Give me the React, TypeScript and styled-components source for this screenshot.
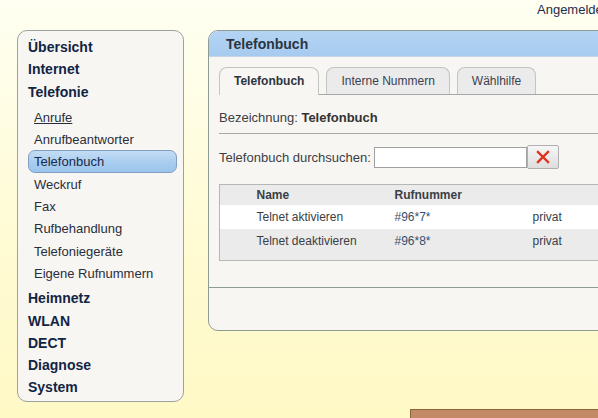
import styled, { createGlobalStyle } from 'styled-components';

const GlobalStyle = createGlobalStyle`
  html, body {
    margin: 0;
    padding: 0;
    height: 100%;
    overflow: hidden;
  }
  body {
    background: linear-gradient(to bottom, #fffff2 0%, #fffbd2 60%, #fff9c6 100%);
    font-family: "Liberation Sans", Arial, sans-serif;
    color: #333;
  }
`;

const Page = styled.div`
  width: 598px;
  height: 418px;
  overflow: hidden;
`;

const TopBar = styled.div`
  height: 30px;
  padding-left: 537px;
  font-size: 13px;
  line-height: 20px;
  color: #1c2c4c;
  white-space: nowrap;
  overflow: hidden;
`;

const Body = styled.div`
  display: flex;
  align-items: flex-start;
  padding-left: 17px;
  gap: 24px;
`;

const Sidebar = styled.nav`
  width: 167px;
  height: 372px;
  flex-shrink: 0;
  background: #f8f6f2;
  border: 1px solid #9aa49c;
  border-radius: 10px;
  padding: 5px 6px 0 10px;
  box-sizing: border-box;
  display: flex;
  flex-direction: column;
`;

const MainItem = styled.div`
  font-size: 14px;
  font-weight: bold;
  color: #122444;
  height: 22.3px;
  line-height: 22px;
`;

const SubList = styled.div`
  display: flex;
  flex-direction: column;
  margin: 3px 0 3px 0;
`;

const SubItem = styled.div<{ $active?: boolean; $link?: boolean }>`
  font-size: 13px;
  height: 22.3px;
  line-height: 21px;
  padding-left: 5px;
  box-sizing: border-box;
  text-decoration: ${(p) => (p.$link ? 'underline' : 'none')};
  border-radius: 7px;
  border: 1px solid ${(p) => (p.$active ? '#7f9fc4' : 'transparent')};
  background: ${(p) =>
    p.$active ? 'linear-gradient(to bottom, #c4dcf4 0%, #a8cdf0 55%, #9cc4ec 100%)' : 'transparent'};
  color: ${(p) => (p.$active ? '#1a2a48' : '#2a2e3a')};
`;

const Panel = styled.section`
  width: 420px;
  height: 301px;
  flex-shrink: 0;
  background: #f8f6f2;
  border: 1px solid #8e9c94;
  border-radius: 10px;
  overflow: hidden;
  box-sizing: border-box;
  display: flex;
  flex-direction: column;
`;

const PanelHeader = styled.h2`
  margin: 0;
  height: 25px;
  background: linear-gradient(to bottom, #b4d4f4 0%, #a6cbef 100%);
  border-bottom: 1px solid #c6d6e4;
  font-size: 14px;
  font-weight: bold;
  color: #2c3440;
  line-height: 26px;
  padding-left: 17px;
`;

const PanelContent = styled.div`
  padding: 10px 0 0 10px;
  height: 231px;
  border-bottom: 1px solid #8e9c94;
  box-sizing: border-box;
`;

const Tabs = styled.div`
  display: flex;
  gap: 7px;
  border-bottom: 1px solid #a8a8a8;
  height: 27px;
`;

const Tab = styled.div<{ $active?: boolean }>`
  box-sizing: border-box;
  padding: 0 14px;
  font-size: 12px;
  font-weight: ${(p) => (p.$active ? 'bold' : 'normal')};
  color: ${(p) => (p.$active ? '#2c3440' : '#3a4250')};
  line-height: 26px;
  border: 1px solid #c4c4c4;
  border-bottom: none;
  border-radius: 8px 8px 0 0;
  background: ${(p) => (p.$active ? '#f8f6f2' : '#ebebeb')};
  margin-bottom: ${(p) => (p.$active ? '-1px' : '0')};
  height: ${(p) => (p.$active ? '28px' : '27px')};
`;

const Field = styled.div`
  font-size: 13px;
  color: #3a3e46;
  padding: 15px 0 8px 0;
  border-bottom: 1px solid #a8aaa8;
  b {
    color: #333;
  }
`;

const SearchRow = styled.div`
  display: flex;
  align-items: center;
  font-size: 13px;
  color: #3a3e46;
  padding-top: 11px;
  gap: 3px;
`;

const SearchInput = styled.input`
  width: 153px;
  height: 21px;
  box-sizing: border-box;
  border: 1px solid #a0a0a0;
  background: #fff;
  margin: 0;
  padding: 0 3px;
`;

const ClearButton = styled.button`
  width: 32px;
  height: 24px;
  margin-left: -3px;
  border: 1px solid #b0b0b0;
  border-radius: 2px;
  background: linear-gradient(to bottom, #f6f6f6, #dedede);
  display: flex;
  align-items: center;
  justify-content: center;
  padding: 0;
`;

const Table = styled.table`
  margin-top: 15px;
  width: 440px;
  border-collapse: collapse;
  background: #ebebeb;
  border: 1px solid #b6b6b6;
  font-size: 12px;
  color: #3a3e46;
  th {
    text-align: left;
    font-weight: bold;
    height: 20px;
    padding: 0;
  }
  td {
    height: 24px;
    padding: 0;
  }
  tfoot td {
    height: 7px;
  }
`;

const Row = styled.tr<{ $odd?: boolean }>`
  background: ${(p) => (p.$odd ? '#ffffff' : '#ebebeb')};
`;

const Number = styled.td`
  color: #33506e;
`;

const Footer = styled.div`
  margin: 7px 0 0 410px;
  height: 20px;
  background: #c28a66;
  border-top: 1px solid #8a6640;
  border-left: 1px solid #8a6640;
`;

const rows = [
  { name: 'Telnet aktivieren', number: '#96*7*', type: 'privat' },
  { name: 'Telnet deaktivieren', number: '#96*8*', type: 'privat' },
];

export default function App() {
  return (
    <Page>
      <GlobalStyle />
      <TopBar>Angemeldet als admin</TopBar>
      <Body>
        <Sidebar>
          <MainItem>Übersicht</MainItem>
          <MainItem>Internet</MainItem>
          <MainItem>Telefonie</MainItem>
          <SubList>
            <SubItem $link>Anrufe</SubItem>
            <SubItem>Anrufbeantworter</SubItem>
            <SubItem $active>Telefonbuch</SubItem>
            <SubItem>Weckruf</SubItem>
            <SubItem>Fax</SubItem>
            <SubItem>Rufbehandlung</SubItem>
            <SubItem>Telefoniegeräte</SubItem>
            <SubItem>Eigene Rufnummern</SubItem>
          </SubList>
          <MainItem>Heimnetz</MainItem>
          <MainItem>WLAN</MainItem>
          <MainItem>DECT</MainItem>
          <MainItem>Diagnose</MainItem>
          <MainItem>System</MainItem>
        </Sidebar>
        <Panel>
          <PanelHeader>Telefonbuch</PanelHeader>
          <PanelContent>
            <Tabs>
              <Tab $active>Telefonbuch</Tab>
              <Tab>Interne Nummern</Tab>
              <Tab>Wählhilfe</Tab>
            </Tabs>
            <Field>
              Bezeichnung: <b>Telefonbuch</b>
            </Field>
            <SearchRow>
              Telefonbuch durchsuchen:
              <SearchInput type="text" />
              <ClearButton aria-label="Suche löschen">
                <svg width="14" height="14" viewBox="0 0 14 14">
                  <path d="M2 2 L12 12 M12 2 L2 12" stroke="#e0321c" strokeWidth="2.4" strokeLinecap="square" />
                </svg>
              </ClearButton>
            </SearchRow>
            <Table>
              <colgroup>
                <col style={{ width: 37 }} />
                <col style={{ width: 138 }} />
                <col style={{ width: 138 }} />
                <col />
              </colgroup>
              <thead>
                <tr>
                  <th />
                  <th>Name</th>
                  <th>Rufnummer</th>
                  <th />
                </tr>
              </thead>
              <tbody>
                {rows.map((r, i) => (
                  <Row key={r.number} $odd={i % 2 === 0}>
                    <td />
                    <td>{r.name}</td>
                    <Number>{r.number}</Number>
                    <td>{r.type}</td>
                  </Row>
                ))}
              </tbody>
              <tfoot>
                <tr>
                  <td colSpan={4} />
                </tr>
              </tfoot>
            </Table>
          </PanelContent>
        </Panel>
      </Body>
      <Footer />
    </Page>
  );
}
